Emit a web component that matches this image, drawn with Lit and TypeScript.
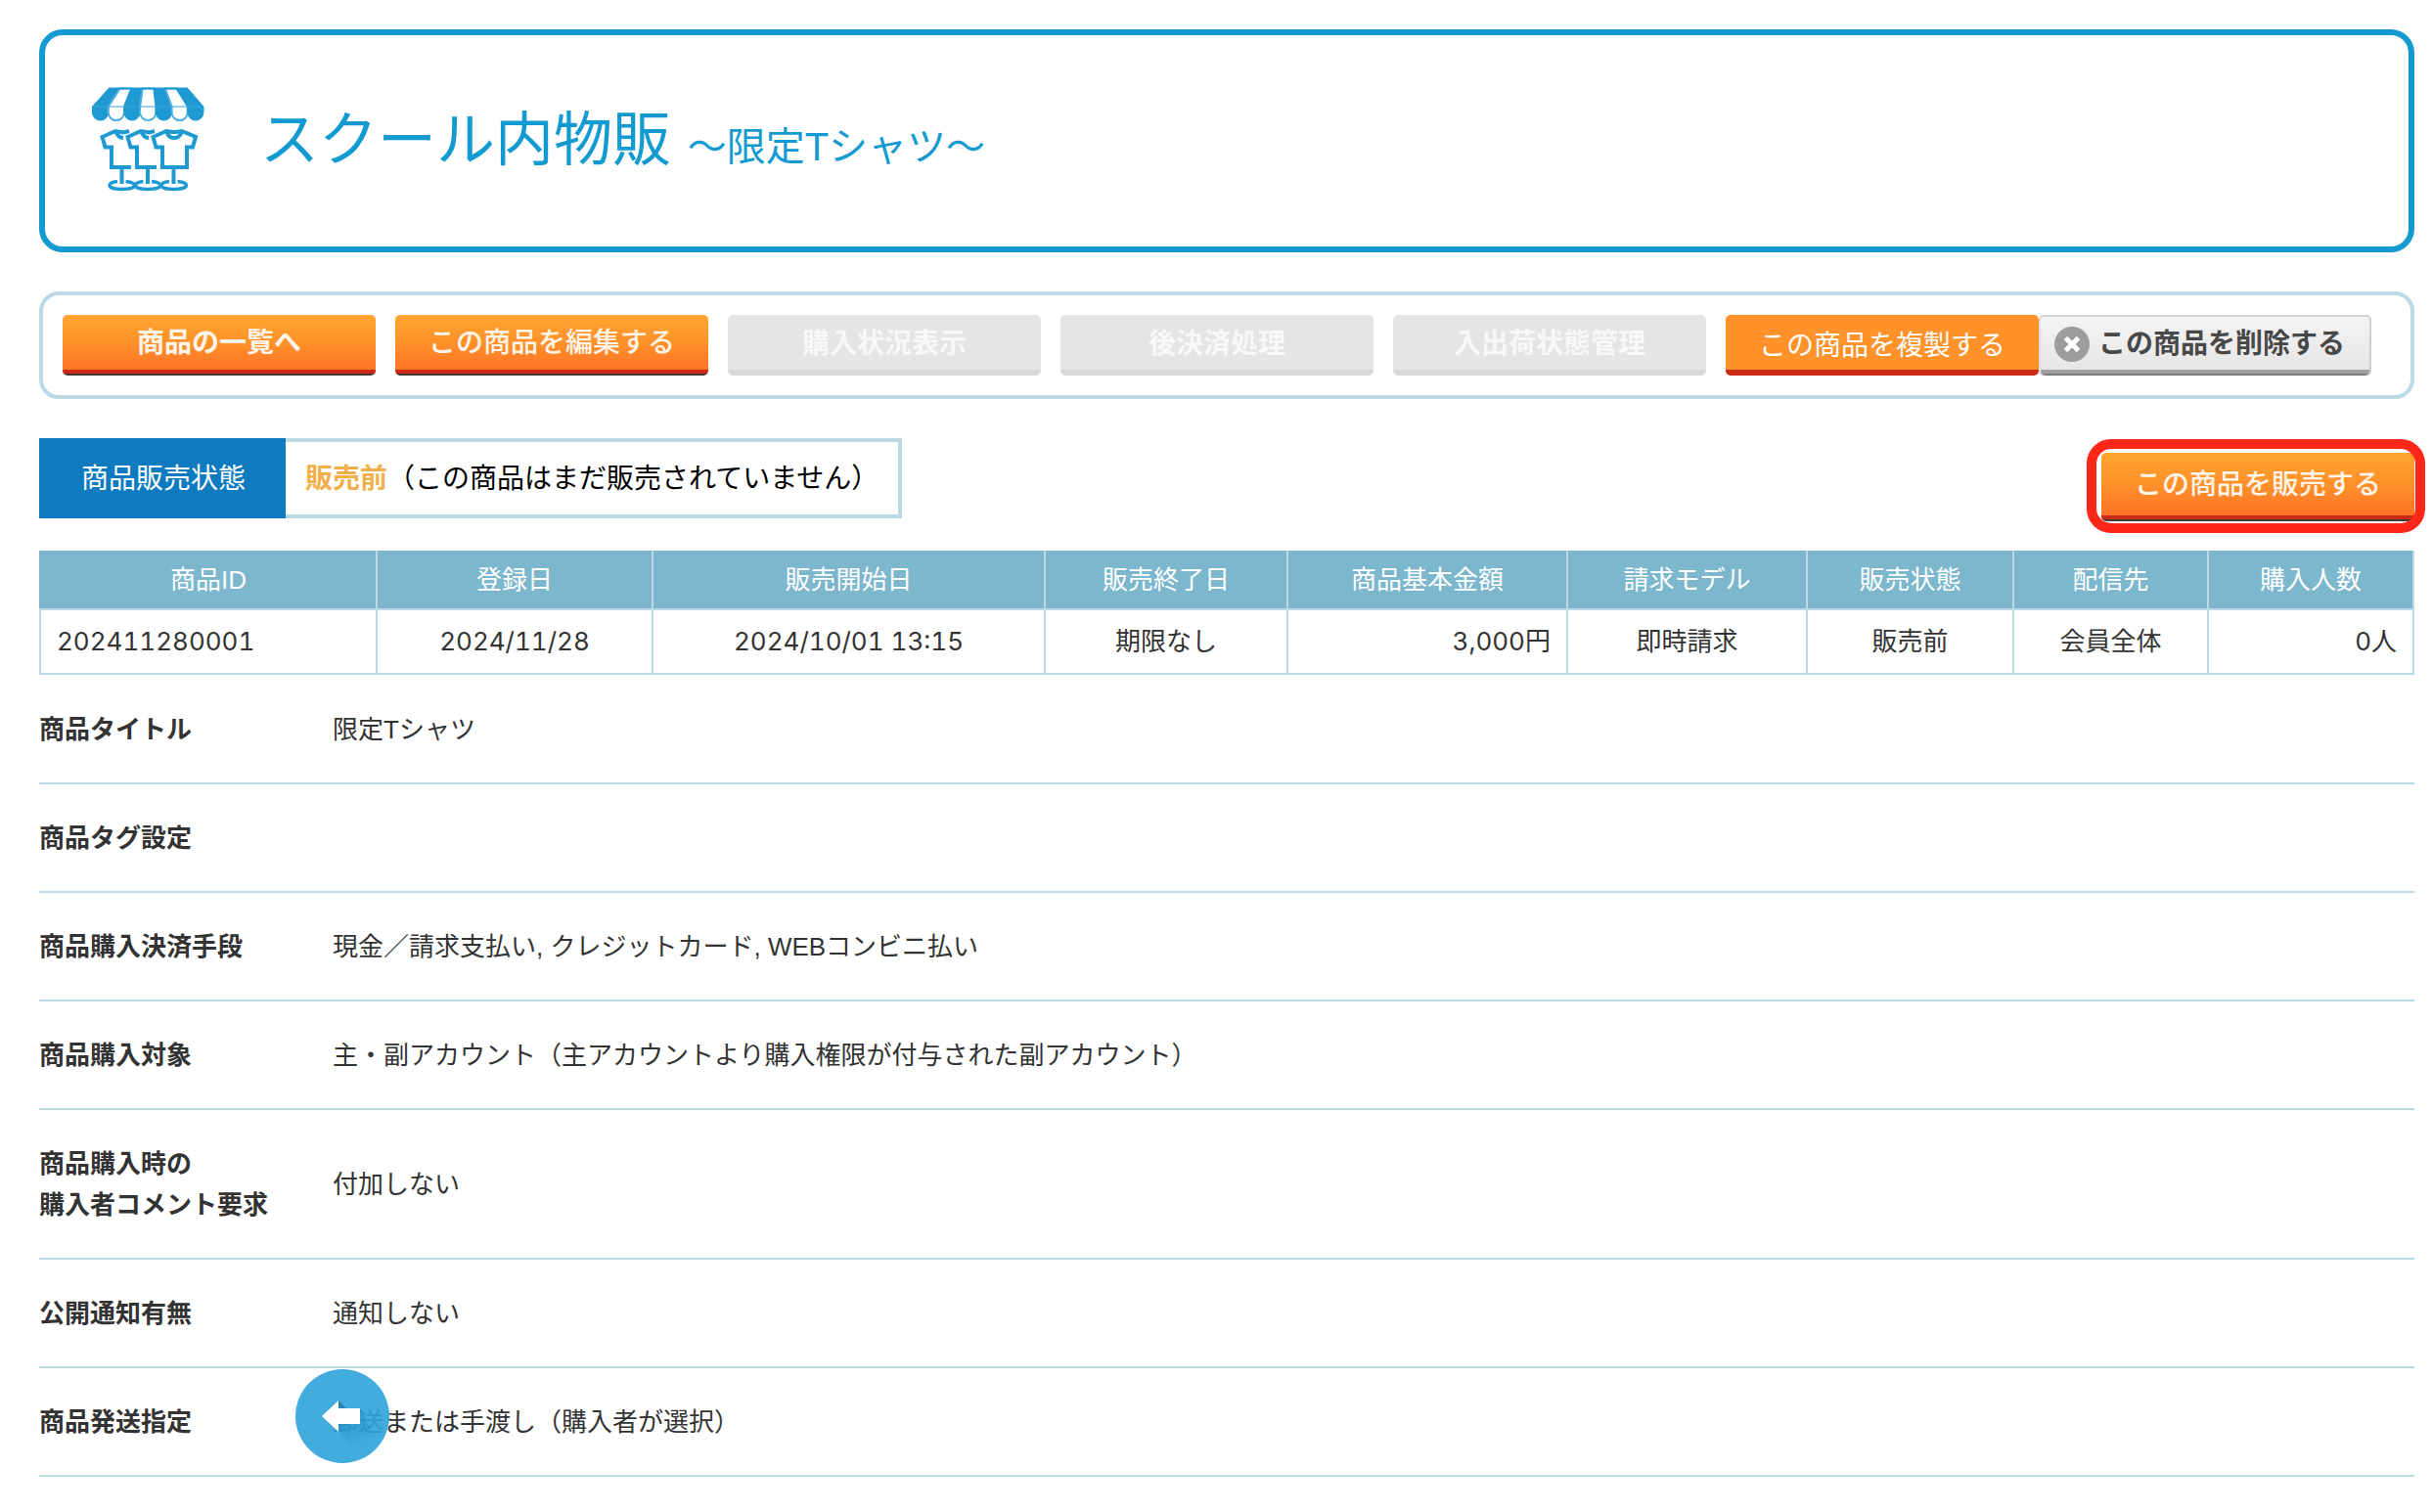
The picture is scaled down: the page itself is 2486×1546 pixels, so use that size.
import { LitElement, html, css, svg } from "lit";
import { customElement } from "lit/decorators.js";
import { classMap } from "lit/directives/class-map.js";

interface Column {
  label: string;
  value: string;
  weight: number;
  align: "left" | "center" | "right";
}

interface Detail {
  label: string[];
  value: string;
}

const COLUMNS: Column[] = [
  { label: "商品ID", value: "202411280001", weight: 344, align: "left" },
  { label: "登録日", value: "2024/11/28", weight: 282, align: "center" },
  { label: "販売開始日", value: "2024/10/01 13:15", weight: 401, align: "center" },
  { label: "販売終了日", value: "期限なし", weight: 248, align: "center" },
  { label: "商品基本金額", value: "3,000円", weight: 286, align: "right" },
  { label: "請求モデル", value: "即時請求", weight: 245, align: "center" },
  { label: "販売状態", value: "販売前", weight: 211, align: "center" },
  { label: "配信先", value: "会員全体", weight: 199, align: "center" },
  { label: "購入人数", value: "0人", weight: 210, align: "right" },
];

const TOTAL_WEIGHT = COLUMNS.reduce((sum, c) => sum + c.weight, 0);

const DETAILS: Detail[] = [
  { label: ["商品タイトル"], value: "限定Tシャツ" },
  { label: ["商品タグ設定"], value: "" },
  { label: ["商品購入決済手段"], value: "現金／請求支払い, クレジットカード, WEBコンビニ払い" },
  {
    label: ["商品購入対象"],
    value: "主・副アカウント（主アカウントより購入権限が付与された副アカウント）",
  },
  { label: ["商品購入時の", "購入者コメント要求"], value: "付加しない" },
  { label: ["公開通知有無"], value: "通知しない" },
  { label: ["商品発送指定"], value: "郵送または手渡し（購入者が選択）" },
];

/* Awning: seven stripes, alternately filled and outlined. */
const STRIPES = Array.from({ length: 7 }, (_, i) => {
  const top = (n: number) => 31 + (81 / 7) * n;
  const low = (n: number) => 14.5 + (113.5 / 7) * n;
  const r = 113.5 / 14;
  return {
    filled: i % 2 === 0,
    d: `M${top(i)} 10.5H${top(i + 1)}L${low(i + 1)} 29V35A${r} ${r} 0 0 1 ${low(i)} 35V29Z`,
  };
});

@customElement("app-root")
export class AppRoot extends LitElement {
  static styles = css`
    :host {
      display: block;
      box-sizing: border-box;
      padding: 30px 18px 34px 40px;
      background: #fff;
      color: #333;
      font-family: "Liberation Sans", "Noto Sans CJK JP", sans-serif;
      font-size: 26px;
      line-height: 42px;
    }
    *,
    *::before,
    *::after {
      box-sizing: border-box;
    }
    .banner {
      display: flex;
      align-items: center;
      gap: 46px;
      padding: 44px 34px;
      border: 6px solid #139ad1;
      border-radius: 24px;
      color: #139ad1;
    }
    .shop-icon {
      display: block;
      flex: none;
    }
    .title {
      margin: 0;
      padding-top: 6px;
      font-size: 60px;
      line-height: 80px;
      font-weight: 400;
    }
    .subtitle {
      font-size: 40px;
    }
    .toolbar {
      display: flex;
      flex-wrap: wrap;
      gap: 20px;
      margin-top: 40px;
      padding: 20px;
      border: 4px solid #bbdae6;
      border-radius: 20px;
    }
    .pair {
      display: flex;
    }
    .btn {
      display: flex;
      align-items: center;
      justify-content: center;
      width: 320px;
      height: 62px;
      margin: 0;
      padding: 0 0 4px;
      border: 0;
      border-radius: 5px;
      font-family: inherit;
      font-size: 28px;
      line-height: 40px;
      font-weight: 500;
      white-space: nowrap;
      cursor: pointer;
    }
    .btn.primary {
      color: #fff5ea;
      background:
        linear-gradient(#cb2a17, #cb2a17) 0 calc(100% - 2px) / 100% 4px no-repeat,
        linear-gradient(#443a36, #443a36) 0 100% / 100% 2px no-repeat,
        linear-gradient(#ffa530, #ff8f2a 50%, #fe7626 85%);
    }
    .btn.strong {
      font-weight: 700;
    }
    .btn.flat {
      padding: 8px 0 6px;
      color: #fff;
      font-weight: 400;
      background: linear-gradient(#cb2a17, #cb2a17) 0 100% / 100% 6px no-repeat, #ff922b;
    }
    .btn.off {
      padding: 4px 0 6px;
      color: #f8f8f8;
      font-weight: 700;
      background: linear-gradient(#dadada, #dadada) 0 100% / 100% 6px no-repeat, #e5e5e5;
      cursor: default;
    }
    .btn.remove {
      justify-content: flex-start;
      width: 340px;
      padding: 4px 0 6px 16px;
      gap: 9px;
      color: #484848;
      font-weight: 700;
      background:
        linear-gradient(#a2a2a2 50%, #6b6b6b) 0 100% / 100% 6px no-repeat,
        linear-gradient(#f4f4f4, #e5e5e5);
      box-shadow: inset 0 2px #d2d2d2, inset -2px 0 #cfcfcf, inset 2px 0 #dcdcdc;
    }
    .status-row {
      display: flex;
      align-items: flex-start;
      justify-content: space-between;
      margin-top: 40px;
    }
    .status {
      display: flex;
      margin: 0;
      font-size: 28px;
    }
    .status-label {
      padding: 21px 41px 19px 43px;
      background: #0e7abf;
      color: #fff;
    }
    .status-value {
      margin: 0;
      padding: 17px 20px 15px;
      border: 4px solid #bbdae6;
      border-left: 0;
      color: #000;
    }
    .state {
      color: #f2b04c;
      font-weight: 700;
    }
    .sell {
      position: relative;
      margin-top: 15px;
    }
    .sell .btn {
      height: 70px;
    }
    .sell::after {
      content: "";
      position: absolute;
      inset: -14px -11px -12px -15px;
      border: 10px solid #ff261a;
      border-radius: 25px;
      pointer-events: none;
    }
    .summary {
      width: 100%;
      margin-top: 30px;
      border-collapse: collapse;
      table-layout: fixed;
    }
    .summary th {
      height: 60px;
      padding: 0 16px;
      border: 2px solid #bbdae6;
      border-top: 0;
      background: #7cb7ce;
      color: #fff;
      font-weight: 400;
    }
    .summary th:first-child {
      border-left-color: #7cb7ce;
    }
    .summary td {
      height: 66px;
      padding: 0 16px;
      border: 2px solid #bbdae6;
      font-family: Inter, "Noto Sans CJK JP", sans-serif;
      font-variant-numeric: tabular-nums;
    }
    .left {
      text-align: left;
    }
    .center {
      text-align: center;
    }
    .right {
      text-align: right;
    }
    .details {
      margin: 1px 0 0;
    }
    .detail {
      display: grid;
      grid-template-columns: 300px 1fr;
      align-items: center;
      padding: 34px 0 33px;
      border-bottom: 2px solid #bbdae6;
    }
    .detail dt {
      font-weight: 700;
    }
    .detail dd {
      min-height: 42px;
      margin: 0;
    }
    .line {
      display: block;
    }
    .back {
      position: fixed;
      left: 302px;
      bottom: 50px;
      width: 96px;
      height: 96px;
    }
    .back svg {
      display: block;
    }
  `;

  private shopIcon() {
    return html`
      <svg class="shop-icon" width="140" height="128" viewBox="0 0 140 128" fill="none" stroke="#1f99d2" aria-hidden="true">
        ${STRIPES.map(
          (s) => svg`<path d=${s.d} fill=${s.filled ? "#1f99d2" : "none"} stroke=${s.filled ? "#1f99d2" : "#4dafdb"} stroke-width=${s.filled ? 1 : 2}/>`,
        )}
        <path d="M31 10.5H112" stroke-width="2" />
        <path d="M15 29H128" stroke="#3fa7d8" stroke-width="1" />
        <g stroke-width="4">
          <path d="M90 54L76.500 60L79.500 70.500H86V91H111V70.500H117L120 60L106 54Q98 56 90 54Z" />
          <path d="M90.500 54.500Q92 61 98 61T106 54.500" />
          <path d="M78 54L72.500 55.500L64 54L50.500 60L53.500 70.500H60V91H80" />
          <path d="M64.500 54.500Q66.500 60.500 72 61" />
          <path d="M52 54L46.500 55.500L38 54L24.500 60L27.500 70.500H34V91H54" />
          <path d="M38.500 54.500Q40.500 60.500 46 61" />
          <path d="M44.500 92V108M71 92V108M97.500 92V108" />
        </g>
        <g stroke-width="3.400">
          <path d="M40 105.500C35 106 32 107.500 32 109.500C32 112 37.500 113.500 44.500 113.500S57.500 112 57.500 109.500C57.500 107.500 54 106 48.500 105.500" />
          <path d="M66.500 105.500C61.500 106 58.500 107.500 58.500 109.500C58.500 112 64 113.500 71 113.500S84 112 84 109.500C84 107.500 80.500 106 75 105.500" />
          <path d="M93 105.500C88 106 85 107.500 85 109.500C85 112 90.500 113.500 97.500 113.500S110.500 112 110.500 109.500C110.500 107.500 107 106 101.500 105.500" />
        </g>
      </svg>
    `;
  }

  render() {
    return html`
      <header class="banner">
        ${this.shopIcon()}
        <h1 class="title">スクール内物販 <span class="subtitle">〜限定Tシャツ〜</span></h1>
      </header>

      <nav class="toolbar" aria-label="商品の操作">
        <button type="button" class="btn primary strong">商品の一覧へ</button>
        <button type="button" class="btn primary">この商品を編集する</button>
        <button type="button" class="btn off" disabled>購入状況表示</button>
        <button type="button" class="btn off" disabled>後決済処理</button>
        <button type="button" class="btn off" disabled>入出荷状態管理</button>
        <div class="pair">
          <button type="button" class="btn flat">この商品を複製する</button>
          <button type="button" class="btn remove">
            <svg width="36" height="36" viewBox="0 0 36 36" aria-hidden="true">
              <circle cx="18" cy="18" r="18" fill="#9d9d9d" />
              <path d="M11.500 11.500L24.500 24.500M24.500 11.500L11.500 24.500" stroke="#fff" stroke-width="5" />
            </svg>
            <span>この商品を削除する</span>
          </button>
        </div>
      </nav>

      <div class="status-row">
        <dl class="status">
          <dt class="status-label">商品販売状態</dt>
          <dd class="status-value"><span class="state">販売前</span>（この商品はまだ販売されていません）</dd>
        </dl>
        <div class="sell">
          <button type="button" class="btn primary">この商品を販売する</button>
        </div>
      </div>

      <table class="summary">
        <colgroup>
          ${COLUMNS.map((c) => html`<col style="width:${(c.weight / TOTAL_WEIGHT) * 100}%" />`)}
        </colgroup>
        <thead>
          <tr>
            ${COLUMNS.map((c) => html`<th scope="col">${c.label}</th>`)}
          </tr>
        </thead>
        <tbody>
          <tr>
            ${COLUMNS.map((c) => html`<td class=${classMap({ [c.align]: true })}>${c.value}</td>`)}
          </tr>
        </tbody>
      </table>

      <dl class="details">
        ${DETAILS.map(
          (d) => html`
            <div class="detail">
              <dt>${d.label.map((l) => html`<span class="line">${l}</span>`)}</dt>
              <dd>${d.value}</dd>
            </div>
          `,
        )}
      </dl>

      <a class="back" href="#" aria-label="戻る">
        <svg width="96" height="96" viewBox="0 0 96 96" aria-hidden="true">
          <defs>
            <linearGradient id="shade" x1="44" y1="34" x2="66" y2="86" gradientUnits="userSpaceOnUse">
              <stop offset="0" stop-color="#1b6f9c" stop-opacity="0.8" />
              <stop offset="0.35" stop-color="#1d84bb" stop-opacity="0.45" />
              <stop offset="1" stop-color="#2b9bd2" stop-opacity="0" />
            </linearGradient>
          </defs>
          <circle cx="48" cy="48" r="48" fill="#2fa3da" fill-opacity="0.9" />
          <path d="M44 32L52 40H66L84 72L68 88L44 64Z" fill="url(#shade)" />
          <path d="M27 48L44 32V40H66V56H44V64Z" fill="#fff" />
        </svg>
      </a>
    `;
  }
}
